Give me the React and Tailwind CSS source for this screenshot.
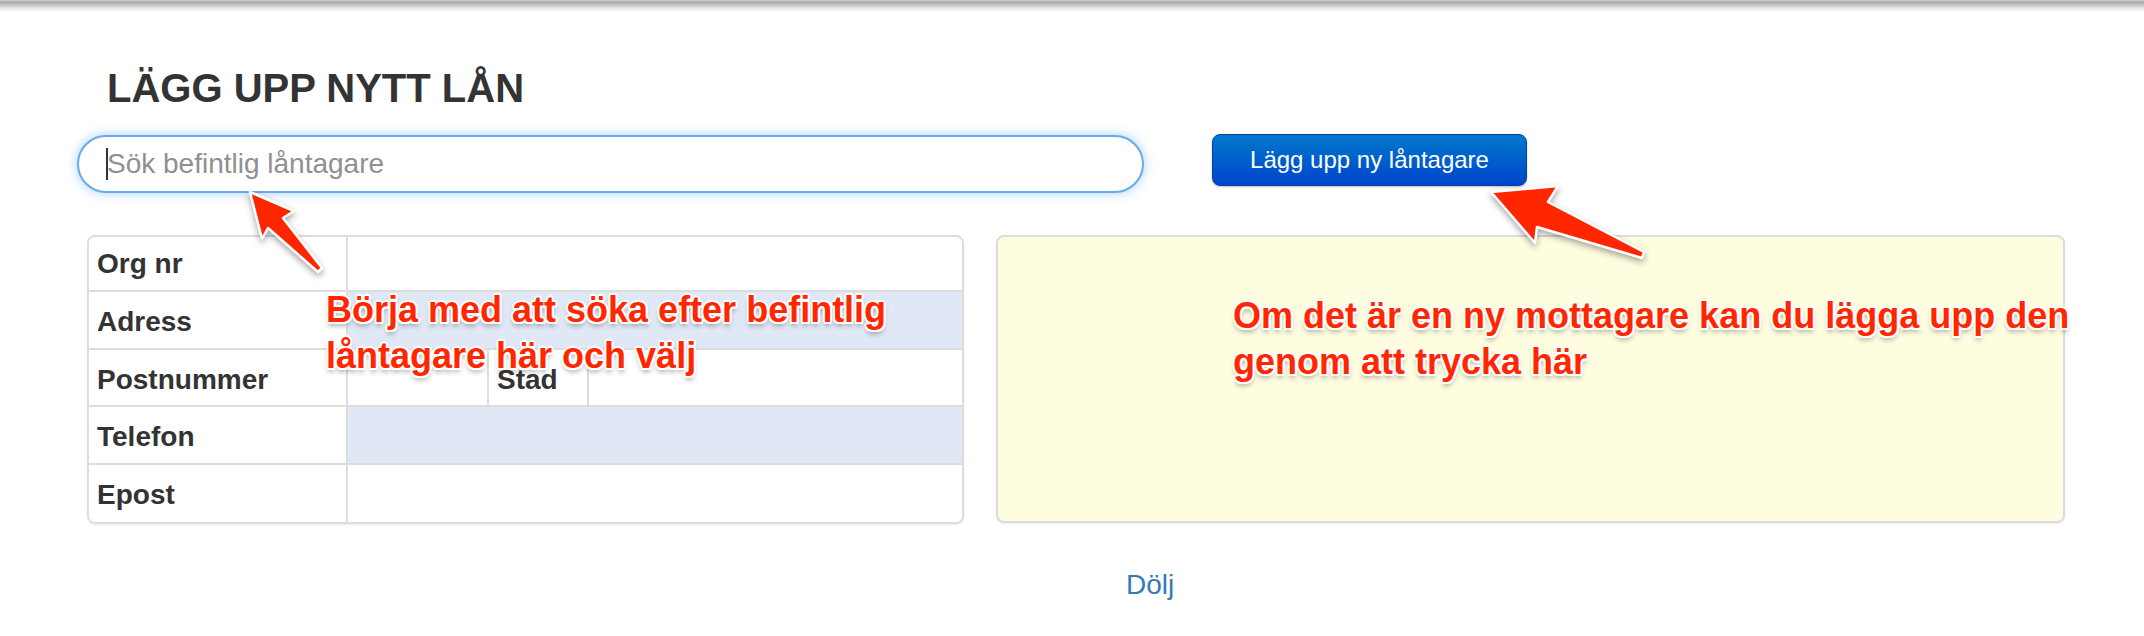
import React from "react";

const annot =
  "absolute whitespace-nowrap text-[36px] leading-[46px] font-bold text-[#ff2600] [text-shadow:0_0_1px_#fff,2px_0_0_#fff,-2px_0_0_#fff,0_2px_0_#fff,0_-2px_0_#fff,1.5px_1.5px_0_#fff,-1.5px_1.5px_0_#fff,1.5px_-1.5px_0_#fff,-1.5px_-1.5px_0_#fff,0_4px_5px_rgba(0,0,0,0.35)]";

function Row({ label, shaded, children, h, pad }) {
  return (
    <div className={`flex ${h}`}>
      <div
        className={`w-[259px] shrink-0 border-r-2 border-[#dddddd] bg-white pl-[8px] flex items-center text-[28px] font-bold text-[#333] ${pad}`}
      >
        {label}
      </div>
      {children ? (
        children
      ) : (
        <div className={`flex-1 ${shaded ? "bg-[#e0e7f5]" : "bg-white"}`} />
      )}
    </div>
  );
}

export default function App() {
  return (
    <div className="relative w-[2144px] h-[636px] overflow-hidden bg-white font-['Liberation_Sans',Arial,sans-serif]">
      <div className="h-[12px] bg-[linear-gradient(to_bottom,#d4d4d4_0px,#a9a9a9_2px,#b9b9b9_4px,#e6e6e6_8px,#ffffff_12px)]" />
      <div className="pl-[77px]">
        <h1 className="mt-[54px] ml-[30px] text-[40px] leading-[44px] font-bold text-[#333]">
          LÄGG UPP NYTT LÅN
        </h1>
        <div className="mt-[25px] flex items-start gap-[68px]">
          <div className="relative w-[1067px] h-[58px]">
            <input
              type="text"
              placeholder="Sök befintlig låntagare"
              className="w-full h-full rounded-full border-2 border-[#66acea] bg-white pl-[28px] text-[28px] text-[#333] outline-none caret-transparent placeholder:text-[#909090] shadow-[0_0_12px_rgba(102,172,234,0.55)]"
            />
            <span className="absolute left-[29px] top-[13px] h-[32px] w-[2px] bg-[#333]" />
          </div>
          <button className="-mt-px w-[315px] h-[52px] rounded-[8px] border border-[#0042a8] bg-[linear-gradient(to_bottom,#0079cc,#0044cc)] text-[24px] text-white shadow-[0_1px_2px_rgba(0,0,0,0.25)]">
            Lägg upp ny låntagare
          </button>
        </div>
        <div className="mt-[42px] ml-[10px] flex gap-[32px]">
          <div className="w-[877px] h-[289px] rounded-[8px] border-2 border-[#dddddd] overflow-hidden flex flex-col divide-y-2 divide-[#dddddd] shadow-[0_1px_2px_rgba(0,0,0,0.08)]">
            <Row label="Org nr" h="h-[55px]" pad="" />
            <Row label="Adress" shaded h="h-[58px]" pad="pt-[4px]" />
            <Row label="Postnummer" h="h-[57px]" pad="pt-[4px]">
              <div className="w-[141px] border-r-2 border-[#dddddd] bg-white" />
              <div className="w-[100px] border-r-2 border-[#dddddd] bg-white pl-[8px] pt-[4px] flex items-center text-[28px] font-bold text-[#333]">
                Stad
              </div>
              <div className="flex-1 bg-white" />
            </Row>
            <Row label="Telefon" shaded h="h-[58px]" pad="pt-[4px]" />
            <Row label="Epost" h="h-[57px]" pad="pt-[3px]" />
          </div>
          <div className="w-[1069px] h-[288px] rounded-[8px] border-2 border-[#dcdcdc] bg-[#fffde0] shadow-[0_1px_2px_rgba(0,0,0,0.08)]" />
        </div>
        <div className="mt-[45px] ml-[1049px] text-[28px] leading-[32px] text-[#337ab7]">
          Dölj
        </div>
      </div>

      <div className={`${annot} left-[326px] top-[287px]`}>
        Börja med att söka efter befintlig
        <br />
        låntagare här och välj
      </div>
      <div className={`${annot} left-[1233px] top-[293px]`}>
        Om det är en ny mottagare kan du lägga upp den
        <br />
        genom att trycka här
      </div>

      <svg
        className="absolute left-0 top-0 pointer-events-none [filter:drop-shadow(0_3px_3px_rgba(0,0,0,0.35))]"
        width="2144"
        height="636"
        viewBox="0 0 2144 636"
      >
        <polygon
          points="250,192 294,211 283,218 322,268 318,272 268,228 262,239"
          fill="#ff2600"
          stroke="#ffffff"
          strokeWidth="2.5"
          strokeLinejoin="round"
        />
        <polygon
          points="1491,192 1558,186 1548,202 1644,252 1642,258 1537,227 1535,243"
          fill="#ff2600"
          stroke="#ffffff"
          strokeWidth="2.5"
          strokeLinejoin="round"
        />
      </svg>
    </div>
  );
}
